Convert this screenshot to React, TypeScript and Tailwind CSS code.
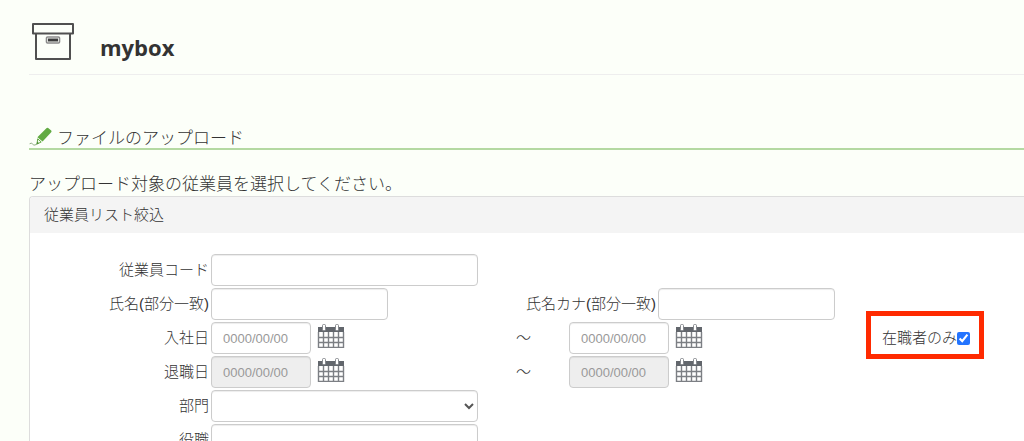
import React, { useState } from 'react';

const inputBase =
    'h-8 rounded border border-[#cccccc] bg-white px-[11px] text-[13px] text-[#555555] placeholder:text-[#999999] shadow-[inset_0_1px_1px_rgba(0,0,0,0.075)] disabled:bg-[#eeeeee]';

const BoxIcon = () => (
    <svg className="h-[38px] w-11 shrink-0" viewBox="0 0 44 38" fill="none" stroke="#505050" strokeWidth="2" strokeLinejoin="round" aria-hidden="true">
        <path d="M5 12V37H39V12" />
        <rect x="2" y="2" width="40" height="9.6" />
        <rect x="15.5" y="15" width="13" height="6" rx="1" stroke="#8a8a8a" strokeWidth="1.6" />
        <path d="M17 18H27" strokeWidth="3" stroke="#3c3c3c" />
    </svg>
);

const PencilIcon = () => (
    <svg className="-mt-0.5 h-5 w-6 shrink-0 overflow-visible" viewBox="0 0 24 20" aria-hidden="true">
        <path d="M17.4 .2 Q18.2 -.8 19.2 0 L22.2 2.4 Q23 3.2 22.2 4.2 L13.6 13.6 L8.4 9.2 Z" fill="#62ab43" />
        <path d="M8.7 10.8 L12.2 14 L8 16 Z" fill="#f4faef" stroke="#62ab43" strokeWidth="1" strokeLinejoin="round" />
        <path d="M7.4 16.4 L8.2 13.6 L10 15.2 Z" fill="#4d8d35" />
        <path d="M.6 15.8 Q2.4 14.4 3.6 16 T6 17 L8 16" fill="none" stroke="#8fae82" strokeWidth="1" />
    </svg>
);

const CalendarIcon = () => (
    <svg className="h-6 w-7" viewBox="0 0 28 24" aria-hidden="true">
        <rect x="1" y="3" width="26" height="21" fill="#ffffff" />
        <rect x="1" y="3" width="26" height="5" fill="#62666c" />
        <path d="M1.5 8V24M6.5 8V24M11.5 8V24M16.5 8V24M21.5 8V24M26.5 8V24M1 13.5H27M1 18.5H27M1 23.5H27" stroke="#7c7f84" strokeWidth="1.4" fill="none" />
        <rect x="5.5" y=".5" width="3" height="6" rx="1" fill="#ffffff" stroke="#85888d" />
        <rect x="18.5" y=".5" width="3" height="6" rx="1" fill="#ffffff" stroke="#85888d" />
    </svg>
);

interface DateFieldProps {
    id: string;
    label: string;
    disabled?: boolean;
}

const DateField: React.FC<DateFieldProps> = ({ id, label, disabled }) => (
    <div className="flex w-[267px] items-start gap-[6px]">
        <input id={id} type="text" aria-label={label} placeholder="0000/00/00" disabled={disabled} className={`${inputBase} w-[100px]`} />
        <button type="button" className="pt-0.5" aria-label={`${label} カレンダー`} disabled={disabled}>
            <CalendarIcon />
        </button>
    </div>
);

interface RowProps {
    label: string;
    htmlFor: string;
    children: React.ReactNode;
}

const Row: React.FC<RowProps> = ({ label, htmlFor, children }) => (
    <div className="flex h-8 items-center">
        <label htmlFor={htmlFor} className="w-[181px] shrink-0 pr-0.5 text-right">{label}</label>
        {children}
    </div>
);

export default function App() {
    const [activeOnly, setActiveOnly] = useState(true);

    return (
        <div className="h-screen overflow-hidden bg-[#fcfff9] pl-[29px] font-['Liberation_Sans','Noto_Sans_CJK_JP',sans-serif] text-[15px] text-[#333333]">
            {/* Header */}
            <header className="flex items-start gap-[25px] border-b border-[#eeeeee] pt-[22px] pb-2.5 pl-[2px]">
                <BoxIcon />
                <h1 className="pt-2 font-['Open_Sans',sans-serif] text-[22px] leading-[34px] font-bold">mybox</h1>
            </header>

            <main className="font-light">
                <h2 className="mt-[55px] flex items-center gap-1 border-b-2 border-[#b4d9a2] text-[17px] leading-[18px] font-light">
                    <PencilIcon />
                    ファイルのアップロード
                </h2>
                <p className="mt-[23px] text-[17px] leading-[23px]">アップロード対象の従業員を選択してください。</p>

                {/* Filter panel */}
                <section className="rounded-tl border-t border-l border-[#dddddd] bg-white">
                    <h3 className="rounded-tl bg-[#f4f4f4] px-3.5 py-1.5 text-[15px] leading-6 font-light">従業員リスト絞込</h3>
                    <form className="flex flex-col gap-0.5 py-[21px]">
                        <Row label="従業員コード" htmlFor="code">
                            <input id="code" type="text" className={`${inputBase} w-[267px]`} />
                        </Row>
                        <Row label="氏名(部分一致)" htmlFor="name">
                            <input id="name" type="text" className={`${inputBase} w-[177px]`} />
                            <label htmlFor="kana" className="w-[270px] pr-0.5 text-right">氏名カナ(部分一致)</label>
                            <input id="kana" type="text" className={`${inputBase} w-[177px]`} />
                        </Row>
                        <Row label="入社日" htmlFor="hire-from">
                            <DateField id="hire-from" label="入社日 開始" />
                            <span className="w-[91px] text-center">～</span>
                            <DateField id="hire-to" label="入社日 終了" />
                            <label className="relative ml-[46px] flex items-center whitespace-nowrap">
                                在職者のみ
                                <input type="checkbox" checked={activeOnly} onChange={(e) => setActiveOnly(e.target.checked)} className="size-[13px] accent-[#2374ff]" />
                                {/* Highlight frame */}
                                <span className="pointer-events-none absolute -top-4 -right-3.5 -bottom-2.5 -left-4 border-5 border-[#ff2a00]" />
                            </label>
                        </Row>
                        <Row label="退職日" htmlFor="leave-from">
                            <DateField id="leave-from" label="退職日 開始" disabled />
                            <span className="w-[91px] text-center">～</span>
                            <DateField id="leave-to" label="退職日 終了" disabled />
                        </Row>
                        <Row label="部門" htmlFor="department">
                            <select id="department" className={`${inputBase} w-[267px]`}>
                                <option></option>
                            </select>
                        </Row>
                        <Row label="役職" htmlFor="position">
                            <input id="position" type="text" className={`${inputBase} w-[267px]`} />
                        </Row>
                    </form>
                </section>
            </main>
        </div>
    );
}
